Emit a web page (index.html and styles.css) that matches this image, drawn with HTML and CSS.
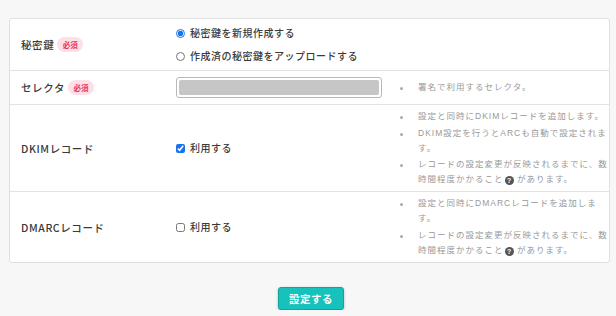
FILE: index.html
```html
<!DOCTYPE html>
<html lang="ja">
<head>
  <meta charset="UTF-8">
  <title>DKIM設定</title>
  <link rel="stylesheet" href="styles.css">
</head>
<body>
  <div class="settings-card">
    <div class="row row-key">
      <div class="row-label">秘密鍵 <span class="required">必須</span></div>
      <div class="row-field">
        <label class="choice"><input type="radio" name="key" checked> 秘密鍵を新規作成する</label>
        <label class="choice"><input type="radio" name="key"> 作成済の秘密鍵をアップロードする</label>
      </div>
      <div class="row-help"></div>
    </div>

    <div class="row row-selector">
      <div class="row-label">セレクタ <span class="required">必須</span></div>
      <div class="row-field">
        <div class="masked-input"><span class="masked"></span></div>
      </div>
      <ul class="row-help">
        <li>署名で利用するセレクタ。</li>
      </ul>
    </div>

    <div class="row row-dkim">
      <div class="row-label">DKIMレコード</div>
      <div class="row-field">
        <label class="choice"><input type="checkbox" checked> 利用する</label>
      </div>
      <ul class="row-help">
        <li>設定と同時にDKIMレコードを追加します。</li>
        <li>DKIM設定を行うとARCも自動で設定されま<br>す。</li>
        <li>レコードの設定変更が反映されるまでに、数<br>時間程度かかること<span class="qmark">?</span> があります。</li>
      </ul>
    </div>

    <div class="row row-dmarc">
      <div class="row-label">DMARCレコード</div>
      <div class="row-field">
        <label class="choice"><input type="checkbox"> 利用する</label>
      </div>
      <ul class="row-help">
        <li>設定と同時にDMARCレコードを追加しま<br>す。</li>
        <li>レコードの設定変更が反映されるまでに、数<br>時間程度かかること<span class="qmark">?</span> があります。</li>
      </ul>
    </div>
  </div>

  <div class="actions">
    <button type="submit">設定する</button>
  </div>
</body>
</html>
```

FILE: styles.css
```css
body {
  margin: 0;
  padding: 18px 6px 0 9px;
  background-color: #f7f7f7;
  font-family: "Noto Sans CJK JP", "Noto Sans", sans-serif;
  color: #333;
}

.settings-card {
  width: 601px;
  background-color: #fff;
  border: 1px solid #e0e0e0;
  border-radius: 3px;
  box-sizing: border-box;
}

.row {
  display: grid;
  grid-template-columns: 166px 214px 1fr;
  align-items: center;
  border-bottom: 1px solid #e2e2e2;
  box-sizing: border-box;
}

.row:last-child {
  border-bottom: none;
}

.row-key { height: 52px; }
.row-selector { height: 34px; }
.row-dkim { height: 87px; }
.row-dmarc { height: 70px; }

.row-label {
  padding-left: 11px;
  font-size: 10.5px;
  font-weight: 500;
  letter-spacing: 0.6px;
  color: #3a3a3a;
  display: flex;
  align-items: center;
  gap: 3px;
}

.required {
  display: inline-block;
  background-color: #fde0e7;
  color: #e6345a;
  font-size: 7.5px;
  font-weight: 700;
  padding: 4px 5.5px;
  border-radius: 9px;
  letter-spacing: 0;
  line-height: 1;
}

.row-field {
  display: flex;
  flex-direction: column;
  gap: 7px;
}

.choice {
  display: flex;
  align-items: center;
  gap: 5px;
  font-size: 10px;
  font-weight: 500;
  letter-spacing: 0.5px;
  line-height: 16px;
  color: #3a3a3a;
}

.choice input {
  width: 9px;
  height: 9px;
  margin: 0;
  accent-color: #1a73e8;
}

.masked-input {
  width: 206px;
  height: 21px;
  border: 1px solid #b8b8b8;
  border-radius: 3px;
  box-sizing: border-box;
  padding: 2px;
}

.masked {
  display: block;
  height: 15px;
  background-color: #c6c6c6;
  border-radius: 2px;
}

.row-help {
  margin: 0;
  padding: 0 0 0 28px;
  list-style: none;
  font-family: "Liberation Sans", "Noto Sans CJK JP", sans-serif;
  font-size: 8.5px;
  letter-spacing: 1px;
  line-height: 15px;
  color: #999;
}

.row-help li {
  position: relative;
}

.row-help li + li {
  margin-top: 1.5px;
}

.row-help li::before {
  content: "";
  position: absolute;
  left: -18px;
  top: 7px;
  width: 3px;
  height: 3px;
  border-radius: 50%;
  background-color: #aaa;
}

.qmark {
  display: inline-block;
  width: 9px;
  height: 9px;
  margin-left: 1px;
  border-radius: 50%;
  background-color: #555;
  color: #fff;
  font-size: 7px;
  font-weight: 700;
  line-height: 9px;
  text-align: center;
  letter-spacing: 0;
  vertical-align: -1px;
}

.actions {
  display: flex;
  justify-content: center;
  padding-top: 24px;
  padding-left: 3px;
}

button {
  background-color: #16c2bb;
  color: #fff;
  border: 1px solid #10a49d;
  border-radius: 3px;
  padding: 3px 10px;
  font-family: "Noto Sans CJK JP", sans-serif;
  font-size: 10.5px;
  font-weight: 700;
  letter-spacing: 0.5px;
  box-shadow: 0 1px 3px rgba(0,0,0,0.25);
  cursor: pointer;
}
```
